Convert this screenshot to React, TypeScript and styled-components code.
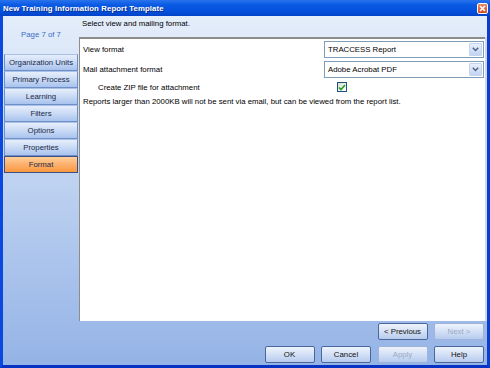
import React from 'react';
import styled, { createGlobalStyle } from 'styled-components';

const navItems = ['Organization Units', 'Primary Process', 'Learning', 'Filters', 'Options', 'Properties', 'Format'];

const Chevron: React.FC = () => (
    <svg width="7" height="5" viewBox="0 0 7 5">
        <path d="M0.8 0.8 L3.5 3.6 L6.2 0.8" fill="none" stroke="#4d6185" strokeWidth="1.4" />
    </svg>
);

const App: React.FC = () => {
    return (
        <Window>
            <GlobalStyle />
            <TitleBar>
                <TitleText>New Training Information Report Template</TitleText>
                <CloseButton>
                    <svg width="7" height="7" viewBox="0 0 7 7">
                        <path d="M1 1 L6 6 M6 1 L1 6" stroke="#fff" strokeWidth="1.6" />
                    </svg>
                </CloseButton>
            </TitleBar>

            <Body>
                <Sidebar>
                    <PageLabel>Page 7 of 7</PageLabel>
                    <NavList>
                        {navItems.map((item) => (
                            <NavButton key={item} $active={item === 'Format'}>{item}</NavButton>
                        ))}
                    </NavList>
                </Sidebar>

                <Main>
                    <Heading>Select view and mailing format.</Heading>
                    <Panel>
                        <FieldRow>
                            <Label>View format</Label>
                            <Select>
                                <SelectValue>TRACCESS Report</SelectValue>
                                <SelectArrow><Chevron /></SelectArrow>
                            </Select>
                        </FieldRow>
                        <FieldRow>
                            <Label>Mail attachment format</Label>
                            <Select>
                                <SelectValue>Adobe Acrobat PDF</SelectValue>
                                <SelectArrow><Chevron /></SelectArrow>
                            </Select>
                        </FieldRow>
                        <CheckRow>
                            <Label $indent>Create ZIP file for attachment</Label>
                            <CheckBox>
                                <svg width="8" height="7" viewBox="0 0 8 7">
                                    <path d="M1 3.5 L3 5.5 L7 1" fill="none" stroke="#21a121" strokeWidth="1.6" />
                                </svg>
                            </CheckBox>
                        </CheckRow>
                        <Note>Reports larger than 2000KB will not be sent via email, but can be viewed from the report list.</Note>
                    </Panel>
                    <Footer>
                        <ButtonRow>
                            <Button>&lt; Previous</Button>
                            <Button disabled>Next &gt;</Button>
                        </ButtonRow>
                        <ButtonRow>
                            <Button>OK</Button>
                            <Button>Cancel</Button>
                            <Button disabled>Apply</Button>
                            <Button>Help</Button>
                        </ButtonRow>
                    </Footer>
                </Main>
            </Body>
        </Window>
    );
};

export default App;

// Styled Components
const GlobalStyle = createGlobalStyle`
  html, body {
    margin: 0;
    padding: 0;
    background: #fff;
  }
  body {
    font-family: "Liberation Sans", Arial, sans-serif;
    font-size: 7.8px;
    color: #000;
  }
`;

const Window = styled.div`
  width: 490px;
  height: 368px;
  display: flex;
  flex-direction: column;
  box-sizing: border-box;
  background: #0a3fd6;
  border-left: 3px solid #0b48e0;
  border-right: 3px solid #0a3ccf;
  border-bottom: 3px solid #0733c4;
`;

const TitleBar = styled.div`
  height: 16px;
  margin: 0 -3px;
  padding: 0 2px 0 3px;
  display: flex;
  align-items: center;
  justify-content: space-between;
  background: linear-gradient(#2a73ec 0%, #0a5ae4 30%, #0450dc 70%, #0344c8 100%);
`;

const TitleText = styled.span`
  color: #fff;
  font-weight: bold;
  font-size: 7.8px;
  letter-spacing: 0.1px;
  text-shadow: 1px 1px 0 #0a2c8a;
`;

const CloseButton = styled.div`
  width: 11px;
  height: 11px;
  box-sizing: border-box;
  border: 1px solid #fff;
  border-radius: 2px;
  background: linear-gradient(#ee8a62, #d8461f);
  display: flex;
  align-items: center;
  justify-content: center;
`;

const Body = styled.div`
  flex: 1;
  display: flex;
  background: linear-gradient(#e4edfa 0%, #c4d6f2 40%, #94b3e6 100%);
`;

const Sidebar = styled.div`
  width: 76px;
  display: flex;
  flex-direction: column;
  align-items: stretch;
`;

const PageLabel = styled.div`
  margin-top: 14px;
  height: 10px;
  text-align: center;
  color: #3c6cc6;
`;

const NavList = styled.div`
  margin-top: 14px;
  display: flex;
  flex-direction: column;
  padding: 0 1px;
`;

const NavButton = styled.div<{ $active?: boolean }>`
  height: 17px;
  box-sizing: border-box;
  border: 1px solid ${(p) => (p.$active ? '#3c4f86' : '#6f8fc7')};
  border-top-color: ${(p) => (p.$active ? '#3c4f86' : '#a9c0e8')};
  background: ${(p) =>
        p.$active
            ? 'linear-gradient(#ffcf98 0%, #fdb06d 50%, #f8983e 100%)'
            : 'linear-gradient(#e6eefb 0%, #c9daf5 50%, #a9c3ee 100%)'};
  color: #1b2a48;
  display: flex;
  align-items: center;
  justify-content: center;
  white-space: nowrap;
`;

const Main = styled.div`
  flex: 1;
  display: flex;
  flex-direction: column;
`;

const Heading = styled.div`
  height: 21px;
  padding: 3px 0 0 3px;
  box-sizing: border-box;
`;

const Panel = styled.div`
  height: 284px;
  box-sizing: border-box;
  margin-right: 2px;
  background: #fff;
  border-top: 2px solid #8e8c86;
  border-left: 1px solid #8e8c86;
  box-shadow: 2px 0 0 #c9d9f2;
  padding: 0 1px 0 3px;
  display: flex;
  flex-direction: column;
`;

const FieldRow = styled.div`
  height: 20px;
  display: flex;
  align-items: center;
  justify-content: space-between;
`;

const CheckRow = styled.div`
  height: 14px;
  display: flex;
  align-items: center;
  margin-top: 1px;
`;

const Label = styled.span<{ $indent?: boolean }>`
  padding-left: ${(p) => (p.$indent ? '15px' : '0')};
  width: ${(p) => (p.$indent ? '239px' : 'auto')};
`;

const Select = styled.div`
  width: 160px;
  height: 17px;
  box-sizing: border-box;
  border: 1px solid #7f9db9;
  display: flex;
  align-items: center;
  background: #fff;
`;

const SelectValue = styled.span`
  flex: 1;
  padding-left: 3px;
`;

const SelectArrow = styled.div`
  width: 13px;
  height: 13px;
  margin-right: 1px;
  border-radius: 1px;
  background: linear-gradient(#e8effc, #c2d3f3);
  border: 1px solid #c3d3f0;
  box-sizing: border-box;
  display: flex;
  align-items: center;
  justify-content: center;
`;

const CheckBox = styled.div`
  width: 10px;
  height: 10px;
  box-sizing: border-box;
  border: 1px solid #1c5180;
  background: linear-gradient(135deg, #dcdcd6, #fff);
  display: flex;
  align-items: center;
  justify-content: center;
`;

const Note = styled.div`
  margin-top: 3px;
`;

const Footer = styled.div`
  flex: 1;
  padding: 2px 3px 0 0;
  display: flex;
  flex-direction: column;
  align-items: flex-end;
  gap: 6px;
`;

const ButtonRow = styled.div`
  display: flex;
  gap: 6.5px;
`;

const Button = styled.button`
  width: 50px;
  height: 17px;
  padding: 0;
  box-sizing: border-box;
  border: 1px solid ${(p) => (p.disabled ? '#9fb4d8' : '#4a679c')};
  border-radius: 2px;
  background: linear-gradient(#eef3fc 0%, #d3e0f6 50%, #b7cbee 100%);
  color: ${(p) => (p.disabled ? '#9aa8c4' : '#111')};
  font-family: "Liberation Sans", Arial, sans-serif;
  font-size: 7.8px;
`;
